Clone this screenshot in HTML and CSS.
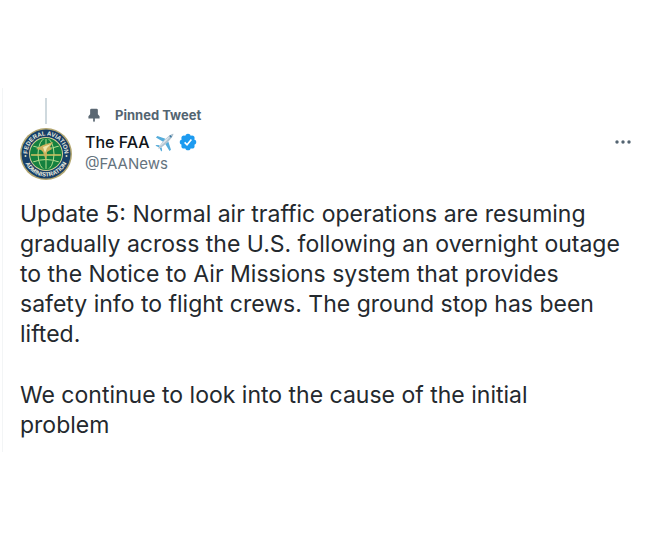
FILE: index.html
```html
<!DOCTYPE html>
<html lang="en">
<head>
    <meta charset="utf-8">
    <title>The FAA on Twitter</title>
    <link rel="stylesheet" href="styles.css">
</head>
<body>
    <article class="tweet">
        <div class="pinned">
            <div class="thread-line"></div>
            <svg class="pin" viewBox="0 0 14 16" aria-hidden="true">
                <path fill="#5b6873" d="M4 0h6q1.500 0 1.500 1.500v5L13.500 9v2.500H8v3L7 16l-1-1.500v-3H.5V9l2-2.500v-5Q2.500 0 4 0z"/>
            </svg>
            <span>Pinned Tweet</span>
        </div>
        <header class="author">
            <svg class="avatar" viewBox="0 0 52 52" role="img" aria-label="Federal Aviation Administration seal">
                <defs>
                    <path id="arc-top" d="M8.200 31A18.500 18.500 0 1 1 43.800 31"/>
                    <path id="arc-bottom" d="M3.500 28A22.600 22.600 0 0 0 48.500 28"/>
                    <clipPath id="globe"><circle cx="26" cy="26" r="15"/></clipPath>
                </defs>
                <circle cx="26" cy="26" r="26" fill="#b3a670"/>
                <circle cx="26" cy="26" r="24.500" fill="#173f68"/>
                <circle cx="26" cy="26" r="17" fill="#d3cf98"/>
                <circle cx="26" cy="26" r="16" fill="#14803f"/>
                <g clip-path="url(#globe)" fill="none" stroke="#b4dc8c" stroke-width="1">
                    <path d="M26 10v32M13 18q13 5 26 0M13 34q13-5 26 0"/>
                    <ellipse cx="26" cy="26" rx="8" ry="16"/>
                    <path stroke="#d6c565" stroke-width="1.500" d="M11 27h30"/>
                </g>
                <path fill="#cdb05c" d="M16 21l7-4 10-3-3 5 2 2-5 3-1 9-3-9-2-2z"/>
                <path fill="#f0e5ad" d="M23 19l8-3-4 4-2 5z"/>
                <text class="seal-text"><textPath href="#arc-top" startOffset="50%" text-anchor="middle">FEDERAL AVIATION</textPath></text>
                <text class="seal-text"><textPath href="#arc-bottom" startOffset="50%" text-anchor="middle">ADMINISTRATION</textPath></text>
                <circle cx="5.500" cy="28" r="1" fill="#e3dfbd"/>
                <circle cx="46.500" cy="28" r="1" fill="#e3dfbd"/>
            </svg>
            <div class="names">
                <div class="display-name">
                    <span>The FAA</span>
                    <svg class="plane" viewBox="0 0 20 20" role="img" aria-label="airplane">
                        <path fill="#55acda" d="M11 6L2.500 3.200 1 4.700l7.500 4.500zM14 9l2.800 8.500-1.500 1.500-4.500-7.500zM5 13l-3.500-.5L.5 13.500 4 15zM7 15l.5 3.500-1 1L5 16z"/>
                        <path fill="#b0c3d1" d="M3.500 16.500c0-2 6-9 9.500-12C15.500 2 18.500 .5 19.300 .8c.5.8-1 3.700-3.500 6.200-3 3.500-10 9.500-12.300 9.500z"/>
                        <path fill="#dfe8ee" d="M5 14.500c2-3.500 7-9 11-11-3 4-7.500 8.500-11 11z"/>
                        <path fill="#35759d" d="M16 2.200l1.800 1.800-1 1L15 3.200z"/>
                    </svg>
                    <svg class="verified" viewBox="0 0 24 24" role="img" aria-label="Verified account">
                        <g fill="#1d9bf0">
                            <circle cx="12" cy="12" r="9"/>
                            <circle cx="12" cy="4.500" r="3.500"/><circle cx="17.300" cy="6.700" r="3.500"/>
                            <circle cx="19.500" cy="12" r="3.500"/><circle cx="17.300" cy="17.300" r="3.500"/>
                            <circle cx="12" cy="19.500" r="3.500"/><circle cx="6.700" cy="17.300" r="3.500"/>
                            <circle cx="4.500" cy="12" r="3.500"/><circle cx="6.700" cy="6.700" r="3.500"/>
                        </g>
                        <path d="M7.500 12.500l3.200 3.200 5.800-7" fill="none" stroke="#fff" stroke-width="2.200"/>
                    </svg>
                </div>
                <a class="handle" href="#">@FAANews</a>
            </div>
            <button class="more" type="button" aria-label="More">
                <svg viewBox="0 0 16 4" aria-hidden="true">
                    <g fill="#536471"><circle cx="2" cy="2" r="1.700"/><circle cx="8" cy="2" r="1.700"/><circle cx="14" cy="2" r="1.700"/></g>
                </svg>
            </button>
        </header>
        <div class="tweet-text">
            <p>Update 5: Normal air traffic operations are resuming gradually across the U.S. following an overnight outage to the Notice to Air Missions system that provides safety info to flight crews. The ground stop has been lifted.</p>
            <p>We continue to look into the cause of the initial<br>problem</p>
        </div>
    </article>
</body>
</html>
```

FILE: styles.css
```css
body {
    margin: 0;
    background-color: #fff;
    color: #0f1419;
    font-family: Inter, "Liberation Sans", Arial, sans-serif;
}
.tweet {
    margin: 88px 0 0 2px;
    padding: 10px 19px 12px 17px;
    border-left: 1px solid #f3f5f6;
}
.pinned {
    display: flex;
    gap: 15px;
    height: 30px;
    color: #536471;
    font-size: 13px;
    font-weight: 700;
    line-height: 34px;
}
.thread-line {
    width: 2px;
    height: 26px;
    margin: 0 26px 0 25px;
    background-color: #cfd9de;
}
.pin {
    width: 12px;
    height: 15px;
    margin-top: 10px;
}
.author {
    display: flex;
    gap: 13px;
}
.avatar {
    width: 52px;
    height: 52px;
}
.seal-text {
    fill: #f0f0e0;
    font-family: "Liberation Sans", Arial, sans-serif;
    font-size: 6px;
    font-weight: 700;
}
.names {
    flex: 1;
    padding-top: 3px;
}
.display-name {
    display: flex;
    align-items: center;
    gap: 5px;
    font-size: 16px;
    font-weight: 500;
    line-height: 22px;
}
.plane {
    width: 19px;
    height: 19px;
}
.verified {
    width: 18px;
    height: 18px;
}
.handle {
    display: block;
    color: #65737e;
    font-size: 15px;
    line-height: 22px;
    text-decoration: none;
}
.more {
    display: flex;
    align-items: center;
    height: 28px;
    padding: 0;
    border: none;
    background: none;
    cursor: pointer;
}
.more svg {
    width: 16px;
    height: 4px;
}
.tweet-text {
    padding-top: 19px;
    color: #24292e;
    font-size: 23px;
    line-height: 30px;
}
.tweet-text p {
    margin: 0 0 31px;
}
.tweet-text p:last-child {
    margin-bottom: 0;
}
```
